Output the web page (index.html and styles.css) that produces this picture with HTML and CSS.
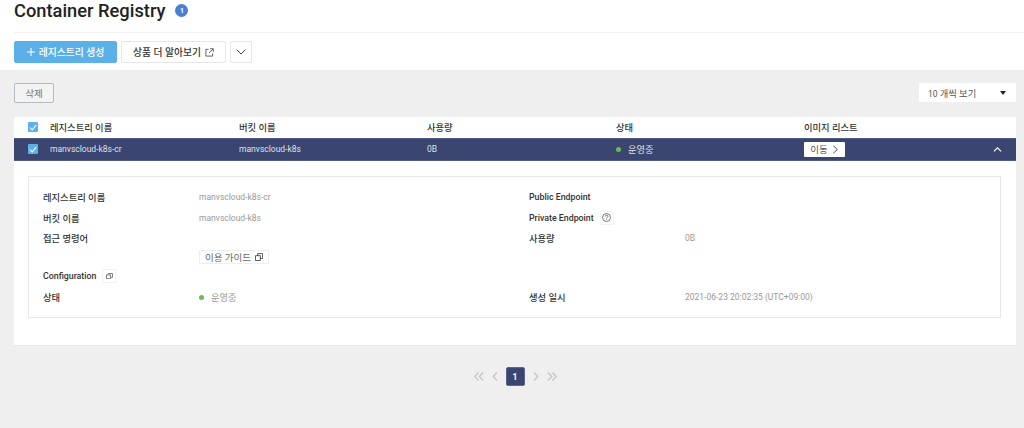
FILE: index.html
```html
<!DOCTYPE html>
<html lang="ko">
<head>
<meta charset="utf-8">
<title>Container Registry</title>
<link rel="stylesheet" href="styles.css">
</head>
<body>
<header class="top">
  <div class="title-row">
    <h1 class="title">Container Registry</h1>
    <span class="count">1</span>
  </div>
  <div class="actions">
    <button class="btn btn-primary"><svg width="8" height="8" viewBox="0 0 9 9"><path d="M4.500 0v9M0 4.500h9" stroke="#fff" stroke-width="1.200" fill="none"/></svg>레지스트리 생성</button>
    <button class="btn btn-plain">상품 더 알아보기<svg width="9" height="9" viewBox="0 0 10 10" fill="none" stroke="#555" stroke-width="1"><path d="M4 1.500H1v7.500h7.500V6M5.500.8h3.700v3.700M9 1L4.500 5.500"/></svg></button>
    <button class="btn btn-icon"><svg width="10" height="6" viewBox="0 0 10 6" fill="none" stroke="#444" stroke-width="1"><path d="M.7.7L5 5l4.300-4.300"/></svg></button>
  </div>
</header>
<main class="content">
  <div class="toolbar">
    <button class="btn-delete">삭제</button>
    <div class="select"><span>10 <span class="ko">개씩 보기</span></span><i class="caret"></i></div>
  </div>
  <section class="panel">
    <div class="row head">
      <span class="check"><svg width="10" height="8" viewBox="0 0 10 8" fill="none" stroke="#fff" stroke-width="1.300"><path d="M1 4l3 3 5-6"/></svg></span>
      <span>레지스트리 이름</span><span>버킷 이름</span><span>사용량</span><span>상태</span><span>이미지 리스트</span><span></span>
    </div>
    <div class="row selected">
      <span class="check"><svg width="10" height="8" viewBox="0 0 10 8" fill="none" stroke="#fff" stroke-width="1.300"><path d="M1 4l3 3 5-6"/></svg></span>
      <span>manvscloud-k8s-cr</span><span>manvscloud-k8s</span><span>0B</span>
      <span class="status ko"><i class="dot"></i>운영중</span>
      <span><button class="btn-move">이동<svg width="7" height="9" viewBox="0 0 7 10" fill="none" stroke="#444" stroke-width="1.100"><path d="M1 .8L5.500 5 1 9.200"/></svg></button></span>
      <span class="collapse"><svg width="9" height="5" viewBox="0 0 10 6" fill="none" stroke="#fff" stroke-width="1.400"><path d="M.7 5.300L5 1l4.300 4.300"/></svg></span>
    </div>
    <div class="detail">
      <div class="detail-box">
        <div class="label ko">레지스트리 이름</div><div class="value">manvscloud-k8s-cr</div>
        <div class="label">Public Endpoint</div><div class="value"></div>

        <div class="label ko">버킷 이름</div><div class="value">manvscloud-k8s</div>
        <div class="label">Private Endpoint<span class="mini"><svg width="9" height="9" viewBox="0 0 9 9" fill="none" stroke="#555" stroke-width=".8"><circle cx="4.500" cy="4.500" r="4"/><path d="M3.200 3.500c0-1.700 2.700-1.700 2.700 0 0 1-1.400 1-1.400 2M4.500 6.300v.8"/></svg></span></div><div class="value"></div>

        <div class="label ko">접근 명령어</div><div class="value"></div>
        <div class="label ko">사용량</div><div class="value">0B</div>

        <div class="label"></div><div class="value"><button class="btn-guide">이용 가이드<svg width="8" height="8" viewBox="0 0 9 9" fill="none" stroke="#444" stroke-width="1"><path d="M.5 3h5.500v5.500H.5zM3 3V.7h5.500v5.500H6"/></svg></button></div>
        <div class="label"></div><div class="value"></div>

        <div class="label">Configuration<span class="mini"><svg width="7" height="6" viewBox="0 0 9 8" fill="none" stroke="#555" stroke-width="1"><path d="M.5 2.500h5.500v5H.5zM3 2.500V.7h5.500v5H6"/></svg></span></div><div class="value"></div>
        <div class="label"></div><div class="value"></div>

        <div class="label ko">상태</div><div class="value status ko"><i class="dot"></i>운영중</div>
        <div class="label ko">생성 일시</div><div class="value">2021-06-23 20:02:35 (UTC+09:00)</div>
      </div>
    </div>
  </section>
  <nav class="pager">
    <svg width="10" height="9" viewBox="0 0 10 9" fill="none" stroke="#c4c4c4" stroke-width="1.200"><path d="M4.500.5L.8 4.500l3.700 4M9 .5L5.300 4.500 9 8.500"/></svg>
    <svg width="6" height="9" viewBox="0 0 6 9" fill="none" stroke="#c4c4c4" stroke-width="1.200"><path d="M5 .5L1.200 4.500 5 8.500"/></svg>
    <span class="page">1</span>
    <svg width="6" height="9" viewBox="0 0 6 9" fill="none" stroke="#c4c4c4" stroke-width="1.200"><path d="M1 .5l3.800 4L1 8.500"/></svg>
    <svg width="10" height="9" viewBox="0 0 10 9" fill="none" stroke="#c4c4c4" stroke-width="1.200"><path d="M1 .5l3.700 4-3.700 4M5.500 .5l3.700 4-3.700 4"/></svg>
  </nav>
</main>
</body>
</html>
```
FILE: styles.css
```css
* { box-sizing: border-box; }
html, body { margin: 0; height: 100%; }
body {
  width: 1024px;
  height: 428px;
  overflow: hidden;
  background: #efefef;
  color: #222;
  font-family: Roboto, "Noto Sans CJK KR", sans-serif;
  font-size: 8.5px;
}
button { font-family: inherit; cursor: pointer; }
.ko { font-size: 9.3px; }
.top { background: #fff; height: 70px; padding: 0 0 0 14px; }
.title-row {
  height: 33px;
  display: flex;
  align-items: center;
  gap: 10px;
  padding-bottom: 11px;
  border-bottom: 1px solid #f0f0f0;
}
.title { margin: 0; font-size: 18.3px; font-weight: 500; color: #222; line-height: 22px; }
.count {
  width: 13px; height: 13px; border-radius: 50%;
  background: #4a7fd4; color: #fff;
  font-size: 7px; font-weight: 700;
  display: flex; align-items: center; justify-content: center;
}
.actions { display: flex; gap: 4px; padding-top: 8px; }
.btn {
  height: 22px;
  border-radius: 2px;
  display: flex; align-items: center; justify-content: center;
  font-size: 9.800px;
  font-weight: 500;
  padding: 0;
}
.btn-primary { width: 103px; gap: 4px; background: #5cb0e8; border: 1px solid #5cb0e8; color: #fff; }
.btn-plain { width: 105px; gap: 4px; background: #fff; border: 1px solid #e6e6e6; color: #333; }
.btn-icon { width: 22px; background: #fff; border: 1px solid #e6e6e6; }
.content { padding: 13px 8px 0 14px; }
.toolbar { display: flex; justify-content: space-between; align-items: flex-start; height: 34px; }
.btn-delete {
  width: 40px; height: 20px;
  background: #f3f3f3;
  border: 1px solid #b4bac2;
  border-radius: 2px;
  color: #777;
  font-size: 9.500px;
  padding: 0;
}
.select {
  width: 97px; height: 19px;
  background: #fff;
  display: flex; align-items: center; justify-content: space-between;
  padding: 0 10px 0 9px;
  color: #555;
}
.caret { width: 0; height: 0; border-left: 3px solid transparent; border-right: 3px solid transparent; border-top: 4px solid #222; }
.panel { background: #fff; height: 229px; border-bottom: 1px solid #e8e8e8; }
.row {
  display: grid;
  grid-template-columns: 36px 189px 188px 189px 188px 1fr 38px;
  align-items: center;
  height: 21px;
}
.head { font-weight: 500; color: #333; font-size: 9.300px; padding-bottom: 1px; }
.selected {
  height: 23px;
  background: #3a4570;
  border-top: 1px solid #4f5a86;
  border-bottom: 1px solid #4f5a86;
  color: #dfe2ea;
  padding-bottom: 1px;
}
.check {
  justify-self: center;
  margin-left: 2px;
  width: 10px; height: 10px;
  background: #5cb0e8;
  border-radius: 1px;
  display: flex; align-items: center; justify-content: center;
}
.check svg { width: 8px; height: 7px; }
.status { display: flex; align-items: center; gap: 7px; }
.dot { width: 5px; height: 5px; border-radius: 50%; background: #63c04a; }
.btn-move {
  width: 41px; height: 15px;
  background: #fff;
  border: 0;
  border-radius: 1px;
  color: #555;
  font-size: 9.500px;
  display: flex; align-items: center; justify-content: center;
  gap: 4px;
  padding: 0;
}
.collapse { display: flex; justify-content: center; }
.detail { padding: 15px 15px 0 14px; }
.detail-box {
  height: 142px;
  border: 1px solid #e8e8e8;
  padding: 10px 14px 0;
  display: grid;
  grid-template-columns: 156px 330px 156px 1fr;
  grid-template-rows: 20px 21px 20px 17px 22px 20px;
  align-items: center;
}
.label { color: #333; font-weight: 500; font-size: 8.800px; display: flex; align-items: center; }
.label.ko { font-size: 9.300px; }
.value { color: #999; }
.mini {
  width: 14px; height: 14px; margin-left: 6px;
  display: inline-flex; align-items: center; justify-content: center;
  border: 1px solid #f2f2f2;
}
.btn-guide {
  width: 70px; height: 14px;
  background: #fff;
  border: 1px solid #eee;
  color: #666;
  font-size: 9.500px;
  display: flex; align-items: center; justify-content: center;
  gap: 4px;
  padding: 0;
}
.pager {
  display: flex; align-items: center; justify-content: center;
  gap: 8px;
  padding-top: 21px;
}
.page {
  width: 19px; height: 19px;
  background: #3a4570;
  border: 1px solid #5a6590;
  border-radius: 2px;
  color: #fff;
  font-size: 8.500px; font-weight: 700;
  display: flex; align-items: center; justify-content: center;
}
```
